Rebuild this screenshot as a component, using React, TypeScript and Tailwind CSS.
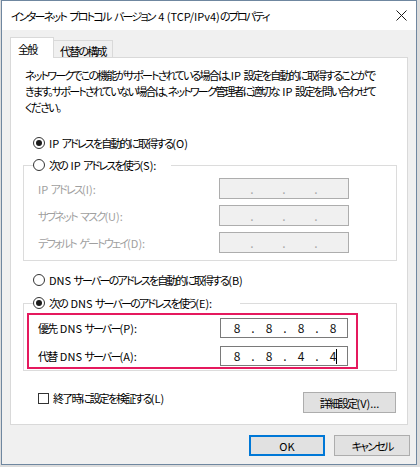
import React from "react";

const jp = "font-['Noto_Sans_CJK_JP','Noto_Sans',sans-serif] [font-feature-settings:'palt']";
const t = "text-[11px] leading-[16px] whitespace-nowrap";

// Japanese runs are set tighter than the Latin ones, like the narrow UI font in the screenshot
function J({ children }: { children: string }) {
  const parts = children.split(/([\u3000-\u30ff\u4e00-\u9fff\uff00-\uffef]+)/).filter((p) => p !== "");
  return (
    <>
      {parts.map((p, i) =>
        /[\u3000-\u30ff\u4e00-\u9fff\uff00-\uffef]/.test(p) ? (
          <span key={i} className="tracking-[-1.8px]">
            {p}
          </span>
        ) : (
          <span key={i} className={`tracking-normal ${p.startsWith(" ") && i > 0 ? "ml-[1px]" : ""}`}>
            {p}
          </span>
        )
      )}
    </>
  );
}

function Radio({ checked }: { checked?: boolean }) {
  return (
    <span className="flex h-[12px] w-[12px] shrink-0 items-center justify-center rounded-full border border-[#333333] bg-white">
      {checked && <span className="h-[6px] w-[6px] rounded-full bg-[#1a1a1a]" />}
    </span>
  );
}

function IpBox({ values, disabled, caret }: { values?: string[]; disabled?: boolean; caret?: boolean }) {
  const cells = values ?? ["", "", "", ""];
  return (
    <div
      className={`flex h-full w-full items-center pl-[4px] ${
        disabled ? "border border-[#adadad] bg-[#f0f0f0]" : "border border-[#7a7a7a] bg-white"
      }`}
    >
      {cells.map((v, i) => (
        <React.Fragment key={i}>
          <span className="relative w-[24px] text-center text-[12px] leading-[16px] text-[#111111]">
            {v}
            {caret && i === 3 && (
              <span className="absolute left-[15px] top-[1px] h-[15px] w-px bg-black" />
            )}
          </span>
          {i < 3 && (
            <span className={`w-[8px] text-center text-[12px] leading-[16px] ${disabled ? "text-[#a8a8a8]" : "text-[#111111]"}`}>
              .
            </span>
          )}
        </React.Fragment>
      ))}
    </div>
  );
}

function Button({ children, primary, w }: { children: string; primary?: boolean; w: string }) {
  return (
    <div
      className={`flex h-[21px] items-center justify-center bg-[#e1e1e1] text-black ${t} ${w} ${
        primary ? "border-2 border-[#0078d7]" : "border border-[#adadad]"
      }`}
    >
      <span>
        <J>{children}</J>
      </span>
    </div>
  );
}

export default function App() {
  return (
    <div className={`h-[467px] w-[420px] overflow-hidden bg-[#dcdcdc] ${jp}`}>
      <div className="ml-[1px] flex h-[465px] w-[416px] flex-col border border-[#6f87a0] bg-[#f0f0f0]">
        {/* title bar */}
        <div className="flex h-[29px] shrink-0 items-center justify-between bg-white pl-[9px] pr-[8px]">
          <span className={`${t} text-black`}>
            <J>インターネット プロトコル バージョン 4 (TCP/IPv4)のプロパティ</J>
          </span>
          <svg width="11" height="11" viewBox="0 0 11 11" className="mr-[1px]">
            <path d="M0.5 0.5 L10.5 10.5 M10.5 0.5 L0.5 10.5" stroke="#1a1a1a" strokeWidth="1" />
          </svg>
        </div>

        {/* body */}
        <div className="flex flex-col px-[8px] pt-[7px]">
          {/* tabs */}
          <div className="relative z-10 flex items-start">
            <div className={`-mb-px flex h-[21px] w-[44px] items-start border border-b-0 border-[#d9d9d9] bg-white pl-[7px] pt-[3px] text-black ${t}`}>
              <J>全般</J>
            </div>
            <div className={`mt-[3px] flex h-[17px] w-[59px] items-start border border-b-0 border-l-0 border-[#d9d9d9] bg-[#f0f0f0] pl-[6px] pt-[2px] text-black ${t}`}>
              <J>代替の構成</J>
            </div>
          </div>

          {/* panel */}
          <div className="flex h-[368px] w-[398px] flex-col border border-[#d9d9d9] bg-white pl-[12px] pt-[9px]">
            <p className={`ml-[2px] text-black ${t} leading-[15px]`}>
              <J>ネットワークでこの機能がサポートされている場合は、IP 設定を自動的に取得することがで</J>
              <br />
              <J>きます。サポートされていない場合は、ネットワーク管理者に適切な IP 設定を問い合わせて</J>
              <br />
              <J>ください。</J>
            </p>

            <div className={`ml-[10px] mt-[20px] flex h-[16px] items-center gap-[4px] text-black ${t}`}>
              <Radio checked />
              <span>
                <J>IP アドレスを自動的に取得する(O)</J>
              </span>
            </div>

            <fieldset className="mt-[6px] w-[374px] border border-[#dcdcdc] p-0 pb-[7px]">
              <legend className={`ml-[9px] flex h-[16px] items-center gap-[4px] pr-[15px] text-black ${t}`}>
                <Radio />
                <span>
                  <J>次の IP アドレスを使う(S):</J>
                </span>
              </legend>
              <div className="mt-[5px] flex flex-col gap-[6px] pl-[14px]">
                {["IP アドレス(I):", "サブネット マスク(U):", "デフォルト ゲートウェイ(D):"].map((l) => (
                  <div key={l} className="flex items-center">
                    <span className={`w-[181px] text-[#a0a0a0] ${t}`}>
                      <J>{l}</J>
                    </span>
                    <div className="h-[21px] w-[130px]">
                      <IpBox disabled />
                    </div>
                  </div>
                ))}
              </div>
            </fieldset>

            <div className={`ml-[10px] mt-[11px] flex h-[16px] items-center gap-[4px] text-black ${t}`}>
              <Radio />
              <span>
                <J>DNS サーバーのアドレスを自動的に取得する(B)</J>
              </span>
            </div>

            <fieldset className="mt-[7px] w-[374px] border border-[#dcdcdc] p-0 pb-px">
              <legend className={`ml-[9px] flex h-[16px] items-center gap-[4px] pr-[28px] text-black ${t}`}>
                <Radio checked />
                <span>
                  <J>次の DNS サーバーのアドレスを使う(E):</J>
                </span>
              </legend>
              <div className="ml-[3px] mt-[2px] flex w-[331px] flex-col gap-[8px] border-2 border-[#e5195e] pb-px pl-[9px] pt-[3px]">
                <div className="flex items-center">
                  <span className={`w-[182px] text-black ${t}`}>
                    <J>優先 DNS サーバー(P):</J>
                  </span>
                  <div className="h-[20px] w-[128px]">
                    <IpBox values={["8", "8", "8", "8"]} />
                  </div>
                </div>
                <div className="flex items-center">
                  <span className={`w-[182px] text-black ${t}`}>
                    <J>代替 DNS サーバー(A):</J>
                  </span>
                  <div className="h-[20px] w-[128px]">
                    <IpBox values={["8", "8", "4", "4"]} caret />
                  </div>
                </div>
              </div>
            </fieldset>

            <div className="mt-[19px] flex w-[373px] items-start justify-between">
              <div className={`ml-[15px] flex h-[16px] items-center gap-[4px] text-black ${t}`}>
                <span className="h-[11px] w-[11px] border border-[#333333] bg-white" />
                <span>
                  <J>終了時に設定を検証する(L)</J>
                </span>
              </div>
              <div className="mt-[2px]">
                <Button w="w-[93px]">詳細設定(V)...</Button>
              </div>
            </div>
          </div>

          {/* dialog buttons */}
          <div className="mt-[10px] flex justify-end gap-[9px]">
            <Button primary w="w-[76px]">OK</Button>
            <div className="-mr-[2px]">
              <Button w="w-[76px]">キャンセル</Button>
            </div>
          </div>
        </div>
      </div>
    </div>
  );
}
